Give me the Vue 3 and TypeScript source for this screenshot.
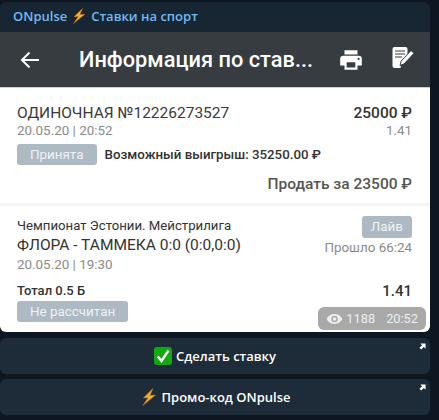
<template>
  <div class="chat">
    <div class="bubble">
      <div class="channel">
        <span>ONpulse</span>
        <svg class="bolt" viewBox="0 0 14 16"><path d="M10.500 0.500 2 8.800 6.300 8.600 1.500 15.500 12.800 6.300 7.800 6.600z" fill="#f5b32c" stroke="#c9741a" stroke-width=".5" /></svg>
        <span>Ставки на спорт</span>
      </div>
      <div class="screen">
        <header class="toolbar">
          <svg class="back" viewBox="0 0 20 18"><path d="M19 9H2M9.5 1.5 2 9l7.5 7.5" fill="none" stroke="#fff" stroke-width="2" /></svg>
          <h1 class="title">Информация по став...</h1>
          <svg class="print" viewBox="0 0 24 24"><path d="M19 8H5a3 3 0 0 0-3 3v6h4v4h12v-4h4v-6a3 3 0 0 0-3-3zm-3 11H8v-5h8v5zm3-7a1 1 0 1 1 0-2 1 1 0 0 1 0 2zM18 3H6v4h12V3z" fill="#fff" /></svg>
          <svg class="edit" viewBox="0 0 24 24">
            <path d="M2.500 1h11a2 2 0 0 1 2 2v7l-6 7-1 5H2.500a2 2 0 0 1-2-2V3a2 2 0 0 1 2-2z" fill="#fff" />
            <path d="M3 5h10M3 8h10M3 11h7" stroke="#363c40" stroke-width="1.200" />
            <path d="M8 19.500l1.200-4.500 9.800-10.500 3 2.800-9.800 10.500z" fill="#fff" stroke="#363c40" stroke-width="1" />
          </svg>
        </header>
        <section class="bet">
          <div class="row">
            <span class="bet-name">ОДИНОЧНАЯ №12226273527</span>
            <span class="sum">25000 ₽</span>
          </div>
          <div class="row dim">
            <span>20.05.20 | 20:52</span>
            <span>1.41</span>
          </div>
          <div class="status-row">
            <span class="tag">Принята</span>
            <span class="win">Возможный выигрыш: 35250.00 ₽</span>
          </div>
          <div class="sell">Продать за 23500 ₽</div>
        </section>
        <section class="event">
          <div class="row top">
            <div>
              <div class="league">Чемпионат Эстонии. Мейстрилига</div>
              <div class="teams">ФЛОРА - ТАММЕКА 0:0 (0:0,0:0)</div>
              <div class="dim-line">20.05.20 | 19:30</div>
            </div>
            <div class="live-col">
              <span class="tag live">Лайв</span>
              <span class="elapsed">Прошло 66:24</span>
            </div>
          </div>
          <div class="row outcome">
            <span>Тотал 0.5 Б</span>
            <span class="coef">1.41</span>
          </div>
          <div class="tag wide">Не рассчитан</div>
        </section>
        <div class="stamp">
          <svg class="eye" viewBox="0 0 24 16"><path d="M12 1C7 1 2.700 4 1 8c1.700 4 6 7 11 7s9.300-3 11-7c-1.700-4-6-7-11-7zm0 11.500a4.500 4.500 0 1 1 0-9 4.500 4.500 0 0 1 0 9zm0-7a2.500 2.500 0 1 0 0 5 2.500 2.500 0 0 0 0-5z" fill="#f0f0f0" /></svg>
          <span>{{ views }}</span>
          <span class="time">20:52</span>
        </div>
      </div>
    </div>
    <button v-for="btn in buttons" :key="btn.label" class="inline-btn">
      <svg v-if="btn.icon === 'check'" class="emoji" viewBox="0 0 18 18"><rect width="18" height="18" rx="3" fill="#12a80f" /><path d="M3.800 9.500 7.500 14 14.500 3.500" fill="none" stroke="#fff" stroke-width="2.400" /></svg>
      <svg v-else class="emoji" viewBox="0 0 14 16"><path d="M10.500 0.500 2 8.800 6.300 8.600 1.500 15.500 12.800 6.300 7.800 6.600z" fill="#f5b32c" stroke="#c9741a" stroke-width=".5" /></svg>
      <span>{{ btn.label }}</span>
      <svg class="arrow" viewBox="0 0 8 8"><path d="M1.500 0.500H7.500V6.500L5.500 4.500 2.500 7.500 0.500 5.500 3.500 2.500z" fill="#fff" /></svg>
    </button>
  </div>
</template>

<script setup lang="ts">
interface InlineButton {
  label: string
  icon: 'check' | 'bolt'
}

const views = 1188

const buttons: InlineButton[] = [
  { label: 'Сделать ставку', icon: 'check' },
  { label: 'Промо-код ONpulse', icon: 'bolt' }
]
</script>

<style>
html,
body {
  margin: 0;
  background: #0e1621;
}
</style>

<style scoped>
.chat {
  width: 430px;
  height: 420px;
  padding-top: 2px;
  box-sizing: border-box;
  font-family: Roboto, sans-serif;
  overflow: hidden;
}

.bubble {
  margin-bottom: 6px;
  border-radius: 6px;
  overflow: hidden;
  background: #182533;
}

.channel {
  display: flex;
  align-items: center;
  gap: 5px;
  height: 30px;
  padding-left: 13px;
  padding-bottom: 2px;
  box-sizing: border-box;
  font-family: "Open Sans", sans-serif;
  font-size: 13px;
  font-weight: 600;
  color: #71baf2;
}

.bolt {
  width: 14px;
  height: 16px;
}

.screen {
  position: relative;
  background: #fff;
}

.toolbar {
  display: flex;
  align-items: center;
  height: 56px;
  padding: 0 14px 0 20px;
  background: #363c40;
  border-bottom: 1px solid #c9d0cd;
  box-sizing: border-box;
}

.back {
  width: 20px;
  height: 18px;
  flex: none;
  margin-right: 39px;
}

.title {
  flex: 1;
  margin: 0;
  font-size: 21.800px;
  font-weight: 500;
  color: #fff;
  white-space: nowrap;
}

.print {
  width: 26px;
  height: 26px;
  margin-right: 28px;
}

.edit {
  width: 24px;
  height: 24px;
  margin-bottom: 4px;
}

.row {
  display: flex;
  justify-content: space-between;
}

.bet {
  height: 118px;
  padding: 16px 18px 0 17px;
  box-sizing: border-box;
  border-bottom: 3px solid #f5f5f5;
}

.bet-name {
  font-size: 15.500px;
  line-height: 18px;
  color: #3a3a3a;
}

.sum {
  font-size: 15.500px;
  line-height: 18px;
  font-weight: 500;
  color: #333;
}

.dim {
  margin-top: 1px;
  font-size: 13.400px;
  line-height: 16px;
  color: #8a8a8a;
}

.status-row {
  display: flex;
  align-items: center;
  gap: 8px;
  margin-top: 5px;
}

.tag {
  display: inline-block;
  padding: 0 13px;
  height: 21px;
  line-height: 21px;
  border-radius: 3px;
  background: #adb9c3;
  color: #f0f3f5;
  font-size: 13.400px;
}

.win {
  font-size: 13.300px;
  font-weight: 500;
  color: #333;
}

.sell {
  margin-top: 10px;
  text-align: right;
  font-size: 15.500px;
  font-weight: 500;
  color: #555;
}

.event {
  height: 126px;
  padding: 12px 18px 0 17px;
  box-sizing: border-box;
}

.league {
  font-size: 13.200px;
  line-height: 16px;
  color: #333;
}

.teams {
  margin-top: 1px;
  font-size: 15.500px;
  line-height: 20px;
  color: #333;
}

.dim-line {
  margin-top: 2px;
  font-size: 13.400px;
  line-height: 16px;
  color: #8a8a8a;
}

.live-col {
  display: flex;
  flex-direction: column;
  align-items: flex-end;
  gap: 2px;
  margin-top: -2px;
}

.live {
  height: 22px;
  line-height: 22px;
  padding: 0 9px;
}

.elapsed {
  font-size: 13.400px;
  line-height: 16px;
  color: #8a8a8a;
}

.outcome {
  align-items: center;
  margin-top: 9px;
  font-size: 13px;
  line-height: 18px;
  font-weight: 500;
  color: #333;
}

.coef {
  font-size: 15px;
}

.wide {
  display: block;
  width: fit-content;
  margin-top: 1px;
}

.stamp {
  position: absolute;
  right: 4px;
  bottom: 2px;
  display: flex;
  align-items: center;
  gap: 3px;
  height: 23px;
  padding: 0 8px;
  border-radius: 6px;
  background: #a9a9a9;
  color: #eee;
  font-size: 12.800px;
}

.eye {
  width: 17px;
  height: 12px;
}

.time {
  margin-left: 8px;
}

.inline-btn {
  position: relative;
  display: flex;
  align-items: center;
  justify-content: center;
  gap: 4px;
  width: 100%;
  height: 36px;
  margin-bottom: 5px;
  padding: 0;
  border: 0;
  border-radius: 6px;
  background: #1e2c3a;
  color: #fff;
  font-family: "Open Sans", sans-serif;
  font-size: 13px;
  font-weight: 600;
}

.emoji {
  width: 18px;
  height: 18px;
}

.arrow {
  position: absolute;
  top: 5px;
  right: 4px;
  width: 7px;
  height: 7px;
}
</style>
